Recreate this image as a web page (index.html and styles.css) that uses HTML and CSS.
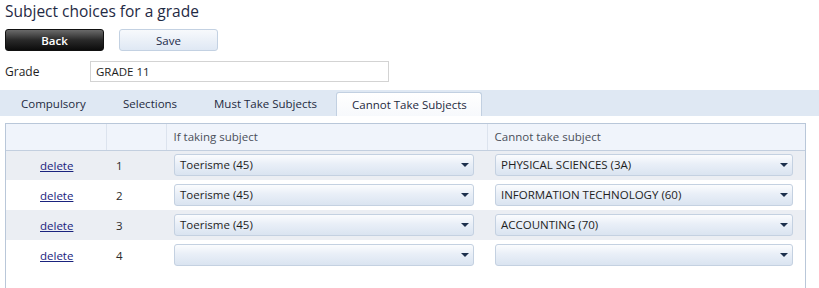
FILE: index.html
```html
<!DOCTYPE html>
<html lang="en">
<head>
    <meta charset="UTF-8">
    <title>Subject choices for a grade</title>
    <link rel="stylesheet" href="styles.css">
</head>
<body>
    <h1 class="title">Subject choices for a grade</h1>
    <div class="buttons">
        <button class="btn btn-back">Back</button>
        <button class="btn btn-save">Save</button>
    </div>
    <div class="field">
        <label>Grade</label>
        <input type="text" value="GRADE 11">
    </div>
    <ul class="tabs">
        <li class="tab1">Compulsory</li>
        <li class="tab2">Selections</li>
        <li class="tab3">Must Take Subjects</li>
        <li class="tab4 current">Cannot Take Subjects</li>
    </ul>
    <div class="grid">
        <table>
            <thead>
                <tr>
                    <th class="c1"></th>
                    <th class="c2"></th>
                    <th class="c3">If taking subject</th>
                    <th class="c4">Cannot take subject</th>
                </tr>
            </thead>
            <tbody>
                <tr class="alt">
                    <td class="c1"><a href="#">delete</a></td>
                    <td class="c2">1</td>
                    <td class="c3"><div class="select"><span>Toerisme (45)</span><i></i></div></td>
                    <td class="c4"><div class="select"><span>PHYSICAL SCIENCES (3A)</span><i></i></div></td>
                </tr>
                <tr>
                    <td class="c1"><a href="#">delete</a></td>
                    <td class="c2">2</td>
                    <td class="c3"><div class="select"><span>Toerisme (45)</span><i></i></div></td>
                    <td class="c4"><div class="select"><span>INFORMATION TECHNOLOGY (60)</span><i></i></div></td>
                </tr>
                <tr class="alt">
                    <td class="c1"><a href="#">delete</a></td>
                    <td class="c2">3</td>
                    <td class="c3"><div class="select"><span>Toerisme (45)</span><i></i></div></td>
                    <td class="c4"><div class="select"><span>ACCOUNTING (70)</span><i></i></div></td>
                </tr>
                <tr>
                    <td class="c1"><a href="#">delete</a></td>
                    <td class="c2">4</td>
                    <td class="c3"><div class="select"><span></span><i></i></div></td>
                    <td class="c4"><div class="select"><span></span><i></i></div></td>
                </tr>
            </tbody>
        </table>
    </div>
</body>
</html>
```

FILE: styles.css
```css
* {
    margin: 0;
    padding: 0;
    box-sizing: border-box;
}
body {
    font-family: "Open Sans", "Noto Sans", sans-serif;
    font-size: 11.5px;
    color: #1e1e1e;
    background-color: #fff;
}
.title {
    font-size: 15.5px;
    font-weight: normal;
    color: #1f2a44;
    line-height: 23px;
    padding-left: 5px;
}
.buttons {
    display: flex;
    gap: 15px;
    padding-left: 5px;
    margin-top: 6px;
}
.btn {
    width: 99px;
    height: 22px;
    border-radius: 3px;
    font-family: inherit;
    font-size: 11.5px;
    font-weight: 600;
    cursor: pointer;
}
.btn-back {
    color: #fff;
    border: 1px solid #111;
    background: linear-gradient(#6a6a6a, #2a2a2a 50%, #0c0c0c);
}
.btn-save {
    color: #1c2b4a;
    font-weight: normal;
    border: 1px solid #c3d1e2;
    background: linear-gradient(#f7f9fc, #dfe8f4);
}
.field {
    display: flex;
    align-items: center;
    padding-left: 5px;
    margin-top: 10px;
    height: 21px;
}
.field label {
    width: 85px;
    font-size: 12px;
    color: #1e1e1e;
}
.field input {
    width: 299px;
    height: 21px;
    border: 1px solid #d3d3d3;
    padding-left: 5px;
    font-family: inherit;
    font-size: 11.5px;
    color: #1e1e1e;
}
.tabs {
    list-style: none;
    display: flex;
    align-items: flex-end;
    gap: 5px;
    margin-top: 8px;
    height: 26px;
    padding-left: 5px;
    background-color: #dfe8f3;
}
.tabs li {
    height: 24px;
    line-height: 23px;
    padding-left: 16px;
    color: #1e2a40;
    white-space: nowrap;
    cursor: pointer;
}
.tabs .tab1 { width: 97px; }
.tabs .tab2 { width: 86px; }
.tabs .tab3 { width: 133px; }
.tabs .tab4 { width: 146px; }
.tabs li.current {
    background: linear-gradient(#fff, #f7f9fc);
    border: 1px solid #c2d0e1;
    border-bottom: none;
    border-radius: 3px 3px 0 0;
    padding-left: 15px;
}
.grid {
    margin: 7px 13px 0 5px;
    height: 165px;
    border: 1px solid #b9c7d9;
    border-bottom: none;
}
.grid table {
    width: 100%;
    border-collapse: collapse;
    table-layout: fixed;
}
.grid th {
    height: 26px;
    text-align: left;
    font-weight: normal;
    color: #4a4f5a;
    background-color: #f0f4fb;
    border-bottom: 1px solid #c3cfdf;
    padding-left: 7px;
}
.grid th + th {
    border-left: 1px solid #dce3ee;
}
.grid .c1 { width: 100px; }
.grid .c2 { width: 60px; }
.grid .c3 { width: 321px; }
.grid td {
    height: 30px;
    padding-left: 8px;
    color: #2a2a2a;
}
.grid td.c1 {
    padding-left: 34px;
}
.grid td.c2 {
    padding-left: 10px;
}
.grid td.c4 {
    padding-right: 12px;
}
.grid td.c3 {
    padding-right: 13px;
}
.grid tr.alt td {
    background-color: #ebeef3;
}
.grid a {
    color: #1a237e;
    text-decoration: underline;
}
.select {
    position: relative;
    height: 22px;
    line-height: 20px;
    border: 1px solid #c4d1e1;
    border-radius: 3px;
    background: linear-gradient(#fbfcfe, #e9eff7 45%, #dae4f1);
    padding-left: 5px;
    color: #1e1e1e;
}
.select span {
    white-space: nowrap;
}
.select i {
    position: absolute;
    right: 4px;
    top: 8px;
    width: 0;
    height: 0;
    border-left: 4px solid transparent;
    border-right: 4px solid transparent;
    border-top: 4px solid #1c2f4c;
}
```
